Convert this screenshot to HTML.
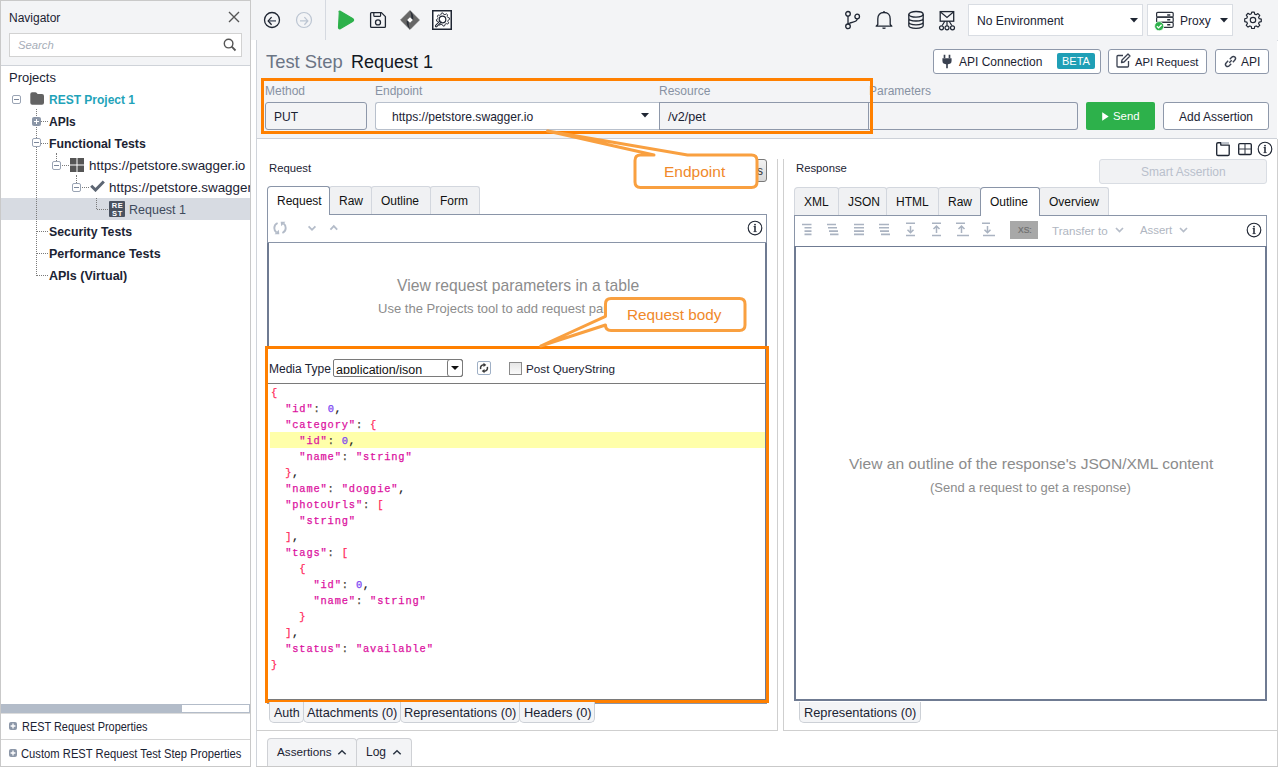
<!DOCTYPE html>
<html><head><meta charset="utf-8">
<style>
*{margin:0;padding:0;box-sizing:border-box}
html,body{width:1278px;height:767px;overflow:hidden;background:#fff}
body{position:relative;font-family:"Liberation Sans",sans-serif;font-size:12px;color:#1b2333}
.a{position:absolute}
.t{position:absolute;white-space:nowrap;line-height:1}
</style></head><body>

<!-- ============ LEFT NAVIGATOR ============ -->
<div class="a" style="left:0;top:0;width:251px;height:767px;border:1px solid #c9c9c9;border-bottom:none;background:#fff"></div>
<div class="a" style="top:1px;left:1px;width:249px;height:65px;background:#f3f4f6;border-bottom:1px solid #cfd3d9"></div>
<div class="t" style="left:9px;top:12px;font-size:12px;color:#1b2333">Navigator</div>
<svg class="a" style="left:228px;top:11px" width="12" height="12" viewBox="0 0 12 12"><path d="M1 1L11 11M11 1L1 11" stroke="#555" stroke-width="1.35"/></svg>
<div class="a" style="left:9px;top:33px;width:233px;height:24px;background:#fff;border:1px solid #d2d2d2"></div>
<div class="t" style="left:18px;top:40px;font-size:11.3px;font-style:italic;color:#a6adb8">Search</div>
<svg class="a" style="left:223px;top:38px" width="14" height="14" viewBox="0 0 14 14"><circle cx="5.6" cy="5.6" r="4.3" fill="none" stroke="#555" stroke-width="1.4"/><path d="M8.7 8.7L12.5 12.5" stroke="#555" stroke-width="1.8"/></svg>

<div class="t" style="left:9px;top:71px;font-size:13px;color:#1b2333">Projects</div>

<!-- tree -->

<!-- dotted connectors -->
<div class="a" style="left:1px;top:198px;width:249px;height:22px;background:#d7dbe2"></div>
<div class="a" style="left:36px;top:109px;width:1px;height:167px;border-left:1px dotted #7a7a7a"></div>
<div class="a" style="left:37px;top:121px;width:11px;height:1px;border-top:1px dotted #7a7a7a"></div>
<div class="a" style="left:37px;top:143px;width:11px;height:1px;border-top:1px dotted #7a7a7a"></div>
<div class="a" style="left:37px;top:231px;width:11px;height:1px;border-top:1px dotted #7a7a7a"></div>
<div class="a" style="left:37px;top:253px;width:11px;height:1px;border-top:1px dotted #7a7a7a"></div>
<div class="a" style="left:37px;top:275px;width:11px;height:1px;border-top:1px dotted #7a7a7a"></div>
<div class="a" style="left:56px;top:153px;width:1px;height:8px;border-left:1px dotted #7a7a7a"></div>
<div class="a" style="left:62px;top:165px;width:7px;height:1px;border-top:1px dotted #7a7a7a"></div>
<div class="a" style="left:76px;top:175px;width:1px;height:8px;border-left:1px dotted #7a7a7a"></div>
<div class="a" style="left:82px;top:187px;width:7px;height:1px;border-top:1px dotted #7a7a7a"></div>
<div class="a" style="left:96px;top:198px;width:1px;height:11px;border-left:1px dotted #7a7a7a"></div>
<div class="a" style="left:97px;top:209px;width:11px;height:1px;border-top:1px dotted #7a7a7a"></div>

<!-- row REST Project 1 -->
<div class="a" style="left:12px;top:95px;width:9px;height:9px;border:1px solid #9aa4b4;border-radius:2px;background:#fff"></div>
<div class="a" style="left:14px;top:99px;width:5px;height:1px;background:#7c879a"></div>
<svg class="a" style="left:30px;top:92px" width="15" height="13" viewBox="0 0 15 13"><path d="M0.3 2.2Q0.3 0.2 2.2 0.2H5.3Q6.2 0.2 6.8 1L7.6 2.1H12Q14 2.1 14 4V10.8Q14 12.7 12 12.7H2.2Q0.3 12.7 0.3 10.8Z" fill="#636363"/></svg>
<div class="t" style="left:49px;top:94px;font-size:12px;font-weight:700;color:#1fa3b9">REST Project 1</div>

<!-- APIs -->
<div class="a" style="left:32px;top:117px;width:9px;height:9px;border-radius:2px;background:#8c97a8"></div>
<div class="a" style="left:34px;top:121px;width:5px;height:1px;background:#fff"></div>
<div class="a" style="left:36px;top:119px;width:1px;height:5px;background:#fff"></div>
<div class="t" style="left:49px;top:116px;font-size:12px;font-weight:700;color:#1b2333">APIs</div>

<!-- Functional Tests -->
<div class="a" style="left:32px;top:138px;width:9px;height:9px;border:1px solid #9aa4b4;border-radius:2px;background:#fff"></div>
<div class="a" style="left:34px;top:142px;width:5px;height:1px;background:#7c879a"></div>
<div class="t" style="left:49px;top:138px;font-size:12.3px;font-weight:700;color:#1b2333">Functional Tests</div>

<!-- https 1 -->
<div class="a" style="left:52px;top:161px;width:9px;height:9px;border:1px solid #9aa4b4;border-radius:2px;background:#fff"></div>
<div class="a" style="left:54px;top:165px;width:5px;height:1px;background:#7c879a"></div>
<svg class="a" style="left:70px;top:158px" width="14" height="14" viewBox="0 0 14 14"><rect x="0" y="0" width="6.5" height="6.5" fill="#555"/><rect x="7.5" y="0" width="6.5" height="6.5" fill="#555"/><rect x="0" y="7.5" width="6.5" height="6.5" fill="#555"/><rect x="7.5" y="7.5" width="6.5" height="6.5" fill="#555"/></svg>
<div class="t" style="left:89px;top:159px;font-size:13.4px;color:#1b2333">https://petstore.swagger.io</div>

<!-- https 2 -->
<div class="a" style="left:72px;top:183px;width:9px;height:9px;border:1px solid #9aa4b4;border-radius:2px;background:#fff"></div>
<div class="a" style="left:74px;top:187px;width:5px;height:1px;background:#7c879a"></div>
<svg class="a" style="left:90px;top:180px" width="15" height="12" viewBox="0 0 15 12"><path d="M1.2 5.8L5.5 10L13.8 1.5" fill="none" stroke="#5d6673" stroke-width="3"/></svg>
<div class="a" style="left:109px;top:176px;width:141px;height:22px;overflow:hidden"><div class="t" style="left:0;top:5px;font-size:13.4px;color:#1b2333">https://petstore.swagger.io</div></div>

<!-- Request 1 selected -->
<div class="a" style="left:109px;top:201px;width:16px;height:16px;background:#4a5260;border-radius:1px"></div>
<div class="t" style="left:109px;top:202px;width:16px;text-align:center;font-size:7.5px;font-weight:700;color:#fff;letter-spacing:0.6px;line-height:7.5px;padding-left:1px">RE<br>ST</div>
<div class="t" style="left:129px;top:204px;font-size:12.5px;color:#3e4a5c">Request 1</div>

<div class="t" style="left:49px;top:226px;font-size:12.3px;font-weight:700;color:#1b2333">Security Tests</div>
<div class="t" style="left:49px;top:248px;font-size:12.5px;font-weight:700;color:#1b2333">Performance Tests</div>
<div class="t" style="left:49px;top:270px;font-size:12.5px;font-weight:700;color:#1b2333">APIs (Virtual)</div>

<!-- scrollbar -->
<div class="a" style="left:1px;top:704px;width:249px;height:9px;background:#fff;border:1px solid #b3bcc9"></div>
<div class="a" style="left:1px;top:704px;width:181px;height:9px;background:#b3bcc9"></div>
<div class="a" style="left:1px;top:713px;width:249px;height:1px;background:#dcdcdc"></div>
<div class="a" style="left:1px;top:739px;width:249px;height:1px;background:#d4d4d4"></div>
<svg class="a" style="left:9px;top:722px" width="8" height="8" viewBox="0 0 8 8"><rect width="8" height="8" rx="2" fill="#8c97a8"/><path d="M1.6 4H6.4M4 1.6V6.4" stroke="#fff" stroke-width="1.3"/></svg>
<div class="t" style="left:22px;top:721px;font-size:12px;color:#1b2333;transform:scaleX(0.91);transform-origin:0 0">REST Request Properties</div>
<svg class="a" style="left:9px;top:749px" width="8" height="8" viewBox="0 0 8 8"><rect width="8" height="8" rx="2" fill="#8c97a8"/><path d="M1.6 4H6.4M4 1.6V6.4" stroke="#fff" stroke-width="1.3"/></svg>
<div class="t" style="left:21px;top:748px;font-size:12px;color:#1b2333;transform:scaleX(0.935);transform-origin:0 0">Custom REST Request Test Step Properties</div>
<div class="a" style="left:0;top:766px;width:251px;height:1px;background:#c9c9c9"></div>



<!-- ============ TOP TOOLBAR ============ -->
<div class="a" style="left:251px;top:0;width:1027px;height:40px;background:#f3f4f6"></div>
<div class="a" style="left:256px;top:40px;width:1022px;height:1px;background:#d5d9e0"></div>
<div class="a" style="left:325px;top:0;width:1px;height:40px;background:#d5d9e0"></div>
<svg class="a" style="left:263px;top:11px" width="18" height="18" viewBox="0 0 18 18"><circle cx="9" cy="9" r="7.5" fill="none" stroke="#1f2633" stroke-width="1.3"/><path d="M13 9.9H6.2" fill="none" stroke="#5a6272" stroke-width="1.5"/><path d="M8.6 6.1L5.2 9.9L8.6 13.7" fill="none" stroke="#1f2633" stroke-width="1.3"/></svg>
<svg class="a" style="left:295px;top:11px" width="18" height="18" viewBox="0 0 18 18"><circle cx="9" cy="9" r="7.5" fill="none" stroke="#bcc5d2" stroke-width="1.2"/><path d="M5 9.9H11.8M9.4 6.1L12.8 9.9L9.4 13.7" fill="none" stroke="#bcc5d2" stroke-width="1.3"/></svg>
<svg class="a" style="left:337px;top:10px" width="18" height="20" viewBox="0 0 18 20"><path d="M2.3 2.5Q1.5 1.2 2.8 1.1L16 8.8Q17.2 10 16 11.2L2.8 18.9Q1.5 18.8 1.5 17.5Z" fill="#2db14b" stroke="#2db14b" stroke-width="1.2" stroke-linejoin="round"/></svg>
<svg class="a" style="left:369px;top:11px" width="18" height="18" viewBox="0 0 18 18"><path d="M1.6 2.6Q1.6 1.6 2.6 1.6H12.4L16.4 5.6V15.4Q16.4 16.4 15.4 16.4H2.6Q1.6 16.4 1.6 15.4Z" fill="none" stroke="#1f2633" stroke-width="1.3" stroke-linejoin="round"/><path d="M4.8 1.6V4.4Q4.8 5.4 5.8 5.4H10.6Q11.6 5.4 11.6 4.4V1.6" fill="none" stroke="#1f2633" stroke-width="1.2"/><circle cx="9" cy="11.4" r="2.5" fill="none" stroke="#1f2633" stroke-width="1.3"/></svg>
<svg class="a" style="left:400px;top:10px" width="20" height="20" viewBox="0 0 20 20"><path d="M10 0.6L19.4 10L10 19.4L0.6 10Z" fill="#676767" stroke="#676767" stroke-width="0.8" stroke-linejoin="round"/><path d="M10 0.8Q14 4 13.2 10L11.4 8.3Q11.6 4.2 10 0.8Z" fill="#2a2f38"/><path d="M10 19.2Q6 16 6.8 10L8.6 11.7Q8.4 15.8 10 19.2Z" fill="#2a2f38"/><path d="M10 7.2L12.8 10L10 12.8L7.2 10Z" fill="#fff"/></svg>
<svg class="a" style="left:432px;top:10px" width="20" height="20" viewBox="0 0 20 20"><rect x="0.75" y="0.75" width="18.5" height="18.5" fill="#fff" stroke="#1f2633" stroke-width="1.5"/><path d="M15.80 7.51 L17.39 7.86 L17.60 9.40 L16.16 10.15 L15.80 11.49 L16.68 12.86 L15.74 14.09 L14.19 13.61 L12.99 14.30 L12.64 15.89 L11.10 16.10 L10.35 14.66 L9.01 14.30 L7.64 15.18 L6.41 14.24 L6.89 12.69 L6.20 11.49 L4.61 11.14 L4.40 9.60 L5.84 8.85 L6.20 7.51 L5.32 6.14 L6.26 4.91 L7.81 5.39 L9.01 4.70 L9.36 3.11 L10.90 2.90 L11.65 4.34 L12.99 4.70 L14.36 3.82 L15.59 4.76 L15.11 6.31Z" fill="none" stroke="#1f2633" stroke-width="0.9" stroke-linejoin="round"/><circle cx="10.5" cy="9.5" r="4.6" fill="#fff"/><circle cx="10.5" cy="9.5" r="3.3" fill="none" stroke="#1f2633" stroke-width="1.2"/><path d="M8.2 12L4.2 16" stroke="#1f2633" stroke-width="2.6" stroke-linecap="round"/><path d="M8 12.2L4.4 15.8" stroke="#fff" stroke-width="0.9" stroke-linecap="round"/></svg>



<svg class="a" style="left:844px;top:10px" width="17" height="20" viewBox="0 0 17 20"><circle cx="4" cy="3.8" r="2.3" fill="none" stroke="#1f2633" stroke-width="1.3"/><circle cx="4" cy="16.3" r="2.3" fill="none" stroke="#1f2633" stroke-width="1.3"/><circle cx="13.2" cy="6.5" r="2.3" fill="none" stroke="#1f2633" stroke-width="1.3"/><path d="M4 6.1V14M13.2 8.8Q13.2 11.2 9 12.2L6 13Q4 13.6 4 14" fill="none" stroke="#1f2633" stroke-width="1.3"/></svg>
<svg class="a" style="left:875px;top:10px" width="18" height="20" viewBox="0 0 18 20"><path d="M2.8 14.5V9Q2.8 2.5 9 2.5Q15.2 2.5 15.2 9V14.5L16.8 16.2H1.2Z" fill="none" stroke="#1f2633" stroke-width="1.3" stroke-linejoin="round"/><path d="M7.5 17.8Q9 19 10.5 17.8" fill="none" stroke="#1f2633" stroke-width="1.3"/><path d="M9 1V2.5" stroke="#1f2633" stroke-width="1.3"/></svg>
<svg class="a" style="left:907px;top:10px" width="18" height="20" viewBox="0 0 18 20"><ellipse cx="9" cy="4.3" rx="7.2" ry="2.8" fill="none" stroke="#1f2633" stroke-width="1.3"/><path d="M1.8 4.3V15.5Q1.8 18.3 9 18.3Q16.2 18.3 16.2 15.5V4.3M1.8 8.3Q1.8 11 9 11Q16.2 11 16.2 8.3M1.8 12Q1.8 14.8 9 14.8Q16.2 14.8 16.2 12" fill="none" stroke="#1f2633" stroke-width="1.3"/></svg>
<svg class="a" style="left:938px;top:10px" width="21" height="21" viewBox="0 0 21 21"><rect x="2.2" y="1.6" width="13.5" height="9.6" fill="none" stroke="#1f2633" stroke-width="1.3"/><path d="M2.2 1.8L9 7.5L15.7 1.8" fill="none" stroke="#1f2633" stroke-width="1.2"/><path d="M9 11.2V15.8M6.8 11.2L4.2 15.5M11.2 11.2L13.8 15.5" fill="none" stroke="#1f2633" stroke-width="1.2"/><circle cx="3.5" cy="17.8" r="2" fill="none" stroke="#1f2633" stroke-width="1.2"/><circle cx="9" cy="17.8" r="2" fill="none" stroke="#1f2633" stroke-width="1.2"/><circle cx="14.5" cy="17.8" r="2" fill="none" stroke="#1f2633" stroke-width="1.2"/></svg>

<div class="a" style="left:968px;top:4px;width:175px;height:32px;background:#fff;border:1px solid #d9dde3"></div>
<div class="t" style="left:977px;top:15px;font-size:12.1px;color:#1b2333">No Environment</div>
<svg class="a" style="left:1130px;top:18px" width="8" height="5" viewBox="0 0 8 5"><path d="M0 0H8L4 4.5Z" fill="#1f2633"/></svg>
<div class="a" style="left:1147px;top:4px;width:86px;height:32px;background:#fff;border:1px solid #d9dde3"></div>
<svg class="a" style="left:1154px;top:11px" width="21" height="21" viewBox="0 0 21 21"><rect x="2.6" y="1.4" width="16.6" height="4.8" rx="1.2" fill="none" stroke="#2a303b" stroke-width="1.2"/><rect x="2.6" y="6.2" width="16.6" height="5.2" rx="1.2" fill="none" stroke="#2a303b" stroke-width="1.2"/><rect x="2.6" y="11.4" width="16.6" height="4.9" rx="1.2" fill="none" stroke="#2a303b" stroke-width="1.2"/><path d="M13.2 3.9H16.3M13.2 8.8H16.3M13.2 13.8H16.3" stroke="#2a303b" stroke-width="1.5"/><circle cx="5.2" cy="15.2" r="4.6" fill="#2db14b" stroke="#fff" stroke-width="0.8"/><path d="M2.9 15.2L4.6 16.9L7.6 13.7" fill="none" stroke="#fff" stroke-width="1.3"/></svg>
<div class="t" style="left:1180px;top:15px;font-size:12px;color:#1b2333">Proxy</div>
<svg class="a" style="left:1220px;top:18px" width="8" height="5" viewBox="0 0 8 5"><path d="M0 0H8L4 4.5Z" fill="#1f2633"/></svg>
<svg class="a" style="left:1244px;top:11px" width="18" height="18" viewBox="0 0 20 20"><path d="M8.6 1.2h2.8l.5 2.3 1.6.7 2-1.3 2 2-1.3 2 .7 1.6 2.3.5v2.8l-2.3.5-.7 1.6 1.3 2-2 2-2-1.3-1.6.7-.5 2.3H8.6l-.5-2.3-1.6-.7-2 1.3-2-2 1.3-2-.7-1.6-2.3-.5V8.6l2.3-.5.7-1.6-1.3-2 2-2 2 1.3 1.6-.7z" fill="none" stroke="#1f2633" stroke-width="1.3" stroke-linejoin="round"/><circle cx="10" cy="10" r="3" fill="none" stroke="#1f2633" stroke-width="1.3"/></svg>


<!-- ============ TEST STEP HEADER ============ -->
<div class="a" style="left:256px;top:40px;width:1021px;height:99px;background:#f3f4f6;border-left:1px solid #d0d4da;border-bottom:1px solid #cdd1d8"></div>
<div class="t" style="left:266px;top:53px;font-size:18.4px;color:#6b7585">Test Step</div>
<div class="t" style="left:351px;top:53px;font-size:18px;color:#111822">Request 1</div>

<div class="t" style="left:265px;top:85px;font-size:12px;color:#8792a3">Method</div>
<div class="a" style="left:265px;top:102px;width:102px;height:28px;background:#f3f4f6;border:1px solid #8e98aa;border-radius:3px"></div>
<div class="t" style="left:274px;top:111px;font-size:12px;color:#1b2333">PUT</div>

<div class="t" style="left:375px;top:85px;font-size:12px;color:#8792a3">Endpoint</div>
<div class="a" style="left:375px;top:102px;width:285px;height:28px;background:#fff;border:1px solid #b8c0cc;border-right:none;border-radius:3px 0 0 3px"></div>
<div class="t" style="left:392px;top:111px;font-size:12.1px;color:#1b2333">https://petstore.swagger.io</div>
<svg class="a" style="left:641px;top:113px" width="8" height="5" viewBox="0 0 8 5"><path d="M0 0H8L4 4.5Z" fill="#1f2633"/></svg>

<div class="t" style="left:659px;top:85px;font-size:12px;color:#8792a3">Resource</div>
<div class="a" style="left:659px;top:102px;width:210px;height:28px;background:#f3f4f6;border:1px solid #8e98aa"></div>
<div class="t" style="left:668px;top:111px;font-size:12.6px;color:#1b2333">/v2/pet</div>

<div class="t" style="left:869px;top:85px;font-size:12px;color:#8792a3">Parameters</div>
<div class="a" style="left:869px;top:102px;width:209px;height:28px;background:#f3f4f6;border:1px solid #8e98aa;border-left:none;border-radius:0 3px 3px 0"></div>

<!-- orange box -->
<div class="a" style="left:261px;top:78px;width:612px;height:56px;border:3px solid #ff8000"></div>

<div class="a" style="left:1086px;top:102px;width:69px;height:28px;background:#2db14b;border-radius:2px"></div>
<svg class="a" style="left:1102px;top:112px" width="8" height="10" viewBox="0 0 8 10"><path d="M0.2 0.2L6.7 4.5L0.2 8.8Z" fill="#fff"/></svg>
<div class="t" style="left:1113px;top:111px;font-size:11.4px;color:#fff">Send</div>
<div class="a" style="left:1163px;top:102px;width:106px;height:28px;background:#fff;border:1px solid #8e98aa;border-radius:3px"></div>
<div class="t" style="left:1179px;top:111px;font-size:12px;color:#1b2333">Add Assertion</div>

<div class="a" style="left:933px;top:49px;width:168px;height:25px;background:#fff;border:1px solid #8e98aa;border-radius:3px"></div>
<svg class="a" style="left:942px;top:54px" width="10" height="15" viewBox="0 0 12 17"><path d="M3 0.5V4.5M9 0.5V4.5" stroke="#3a4150" stroke-width="2"/><path d="M0.5 4.5H11.5V8Q11.5 12 6 12Q0.5 12 0.5 8Z" fill="#3a4150"/><path d="M6 11.5V16.5" stroke="#3a4150" stroke-width="2"/></svg>
<div class="t" style="left:959px;top:56px;font-size:12px;color:#1b2333">API Connection</div>
<div class="a" style="left:1057px;top:53px;width:38px;height:16px;background:#1f9fb6;border-radius:2px"></div>
<div class="t" style="left:1062px;top:56px;font-size:11px;color:#fff">BETA</div>

<div class="a" style="left:1108px;top:49px;width:99px;height:25px;background:#fff;border:1px solid #8e98aa;border-radius:3px"></div>
<svg class="a" style="left:1116px;top:53px" width="15" height="15" viewBox="0 0 15 15"><path d="M7 2.5H2Q1 2.5 1 3.5V13Q1 14 2 14H11.5Q12.5 14 12.5 13V8" fill="none" stroke="#3a4150" stroke-width="1.3"/><path d="M5.5 9.5L6 7L12 1L14 3L8 9Z" fill="none" stroke="#3a4150" stroke-width="1.3" stroke-linejoin="round"/></svg>
<div class="t" style="left:1135px;top:57px;font-size:11.3px;color:#1b2333">API Request</div>

<div class="a" style="left:1215px;top:49px;width:54px;height:25px;background:#fff;border:1px solid #8e98aa;border-radius:3px"></div>
<svg class="a" style="left:1223px;top:54px" width="15" height="15" viewBox="0 0 15 15"><path d="M6.3 8.7L8.7 6.3M5.2 6.8L3.3 8.7Q1.6 10.4 3.1 11.9Q4.6 13.4 6.3 11.7L8.2 9.8M9.8 8.2L11.7 6.3Q13.4 4.6 11.9 3.1Q10.4 1.6 8.7 3.3L6.8 5.2" fill="none" stroke="#3a4150" stroke-width="1.4"/></svg>
<div class="t" style="left:1241px;top:56px;font-size:12px;color:#1b2333">API</div>



<!-- ============ REQUEST PANEL ============ -->
<div class="a" style="left:256px;top:139px;width:522px;height:592px;background:#fff;border-left:1px solid #d0d4da;border-bottom:1px solid #cfcfcf"></div>
<div class="a" style="left:783px;top:139px;width:495px;height:592px;background:#fff;border-bottom:1px solid #cfcfcf"></div>
<div class="a" style="left:777px;top:159px;width:1px;height:572px;background:#cfcfcf"></div>
<div class="a" style="left:783px;top:159px;width:1px;height:572px;background:#cfcfcf"></div>
<div class="a" style="left:1277px;top:139px;width:1px;height:628px;background:#cfcfcf"></div>

<div class="t" style="left:269px;top:163px;font-size:11.3px;color:#1b2333">Request</div>
<!-- hidden button behind callout -->
<div class="a" style="left:700px;top:159px;width:67px;height:23px;border:1px solid #7a7a7a;border-radius:3px;background:linear-gradient(#f2f2f2,#d8d8d8)"></div>
<div class="t" style="left:757px;top:165px;font-size:12px;color:#333">s</div>

<!-- tabs -->
<div class="a" style="left:267px;top:214px;width:500px;height:1px;background:#8a95a8"></div>
<div class="a" style="left:329px;top:186px;width:43px;height:28px;background:#f0f1f3;border:1px solid #d3d7de;border-bottom:none;border-radius:3px 3px 0 0"></div>
<div class="a" style="left:371px;top:186px;width:60px;height:28px;background:#f0f1f3;border:1px solid #d3d7de;border-bottom:none;border-radius:3px 3px 0 0"></div>
<div class="a" style="left:430px;top:186px;width:50px;height:28px;background:#f0f1f3;border:1px solid #d3d7de;border-bottom:none;border-radius:3px 3px 0 0"></div>
<div class="a" style="left:267px;top:186px;width:63px;height:29px;background:#fff;border:1px solid #8a95a8;border-bottom:none;border-radius:4px 3px 0 0"></div>
<div class="t" style="left:277px;top:195px;font-size:12px;color:#111">Request</div>
<div class="t" style="left:339px;top:195px;font-size:12px;color:#111">Raw</div>
<div class="t" style="left:381px;top:195px;font-size:12px;color:#111">Outline</div>
<div class="t" style="left:440px;top:195px;font-size:12px;color:#111">Form</div>

<!-- content box -->
<div class="a" style="left:267px;top:214px;width:500px;height:490px;border:1px solid #8a95a8;border-top:none"></div>
<div class="a" style="left:267px;top:242px;width:500px;height:1px;background:#8a95a8"></div>
<div class="a" style="left:267px;top:243px;width:2px;height:460px;background:#6f7b92"></div>
<div class="a" style="left:765px;top:243px;width:2px;height:460px;background:#6f7b92"></div>
<svg class="a" style="left:270px;top:218px" width="20" height="20" viewBox="270 218 20 20"><path d="M277.6 223Q274.3 224.5 274.3 228Q274.3 231 276.5 232.5" fill="none" stroke="#b4bcc9" stroke-width="1.9"/><path d="M274.6 234.3H279.3L278.8 229.8Z" fill="#b4bcc9"/><path d="M282.4 233Q285.7 231.5 285.7 228Q285.7 225 283.5 223.5" fill="none" stroke="#b4bcc9" stroke-width="1.9"/><path d="M285.4 221.7H280.7L281.2 226.2Z" fill="#b4bcc9"/></svg>
<svg class="a" style="left:306px;top:223px" width="12" height="10" viewBox="306 223 12 10"><path d="M308.6 226.3L312 229.8L315.4 226.3" fill="none" stroke="#b4bcc9" stroke-width="1.8"/></svg>
<svg class="a" style="left:328px;top:222px" width="12" height="10" viewBox="328 222 12 10"><path d="M330.4 229.6L333.8 226.1L337.2 229.6" fill="none" stroke="#b4bcc9" stroke-width="1.8"/></svg>
<svg class="a" style="left:747px;top:220px" width="16" height="16" viewBox="0 0 16 16"><circle cx="8" cy="8" r="6.8" fill="none" stroke="#1f2633" stroke-width="1.15"/><rect x="7.2" y="3.9" width="1.6" height="1.5" fill="#1f2633"/><path d="M8 6.3V11.3" stroke="#1f2633" stroke-width="1.5"/><path d="M6.6 6.6H8.6M6.6 11.6H9.6" stroke="#1f2633" stroke-width="0.9"/></svg>

<div class="t" style="left:397px;top:278px;font-size:15.7px;color:#8c8c8c">View request parameters in a table</div>
<div class="t" style="left:378px;top:302px;font-size:13.5px;color:#8c8c8c;transform:scaleX(0.965);transform-origin:0 0">Use the Projects tool to add request parameters</div>

<!-- request body box -->
<div class="a" style="left:268px;top:349px;width:497px;height:351px;background:#fff"></div>
<div class="t" style="left:269px;top:363px;font-size:12px;color:#1b2333">Media Type</div>
<div class="a" style="left:333px;top:359px;width:130px;height:18px;background:#fff;border:1px solid #7a7a7a;border-radius:2px"></div>
<div class="a" style="left:447px;top:359px;width:16px;height:18px;border:1px solid #7a7a7a;border-radius:3px"></div>
<svg class="a" style="left:451px;top:366px" width="8" height="4" viewBox="0 0 8 4"><path d="M0 0H8L4 4Z" fill="#111"/></svg>
<div class="a" style="left:334px;top:361px;width:112px;height:13px;overflow:hidden"><div class="t" style="left:2px;top:3px;font-size:12.5px;color:#111">application/json</div></div>
<div class="a" style="left:477px;top:361px;width:14px;height:14px;border:1px solid #9fb0c6;border-radius:2px;background:#fff"></div>
<svg class="a" style="left:477px;top:361px" width="14" height="14" viewBox="0 0 14 14"><path d="M3.6 8.2Q3 4 7 3.8" fill="none" stroke="#3a3a3a" stroke-width="1.5"/><path d="M6.5 1.8L9.3 3.9L6.5 5.9Z" fill="#3a3a3a"/><path d="M10.4 5.8Q11 10 7 10.2" fill="none" stroke="#3a3a3a" stroke-width="1.5"/><path d="M7.5 12.2L4.7 10.1L7.5 8.1Z" fill="#3a3a3a"/></svg>
<div class="a" style="left:509px;top:362px;width:13px;height:13px;border:1px solid #8a8a8a;background:linear-gradient(#e6e6e6,#fafafa)"></div>
<div class="t" style="left:526px;top:363px;font-size:11.7px;color:#1b2333">Post QueryString</div>

<div class="a" style="left:268px;top:383px;width:497px;height:317px;border-top:1px solid #7a7a7a;border-bottom:1px solid #7a7a7a"></div>
<div class="a" style="left:270px;top:432px;width:495px;height:16px;background:#ffffaa"></div>
<pre id="code" class="a" style="left:271px;top:385px;font-family:'Liberation Mono',monospace;font-size:10.4px;letter-spacing:0.84px;line-height:16px;font-weight:400;-webkit-text-stroke:0.25px currentColor"><span style="color:#ff2a5c">{</span>
  <span style="color:#dc12a0">"id"</span><span style="color:#4a4538">: </span><span style="color:#7b45f2">0</span><span style="color:#111">,</span>
  <span style="color:#dc12a0">"category"</span><span style="color:#4a4538">: </span><span style="color:#ff2a5c">{</span>
    <span style="color:#dc12a0">"id"</span><span style="color:#4a4538">: </span><span style="color:#7b45f2">0</span><span style="color:#111">,</span>
    <span style="color:#dc12a0">"name"</span><span style="color:#4a4538">: </span><span style="color:#dc12a0">"string"</span>
  <span style="color:#ff2a5c">}</span><span style="color:#111">,</span>
  <span style="color:#dc12a0">"name"</span><span style="color:#4a4538">: </span><span style="color:#dc12a0">"doggie"</span><span style="color:#111">,</span>
  <span style="color:#dc12a0">"photoUrls"</span><span style="color:#4a4538">: </span><span style="color:#ff2a5c">[</span>
    <span style="color:#dc12a0">"string"</span>
  <span style="color:#ff2a5c">]</span><span style="color:#111">,</span>
  <span style="color:#dc12a0">"tags"</span><span style="color:#4a4538">: </span><span style="color:#ff2a5c">[</span>
    <span style="color:#ff2a5c">{</span>
      <span style="color:#dc12a0">"id"</span><span style="color:#4a4538">: </span><span style="color:#7b45f2">0</span><span style="color:#111">,</span>
      <span style="color:#dc12a0">"name"</span><span style="color:#4a4538">: </span><span style="color:#dc12a0">"string"</span>
    <span style="color:#ff2a5c">}</span>
  <span style="color:#ff2a5c">]</span><span style="color:#111">,</span>
  <span style="color:#dc12a0">"status"</span><span style="color:#4a4538">: </span><span style="color:#dc12a0">"available"</span>
<span style="color:#ff2a5c">}</span></pre>

<div class="a" style="left:265px;top:346px;width:504px;height:357px;border:3px solid #ff8000"></div>

<!-- bottom tabs -->
<div class="a" style="left:269px;top:702px;width:35px;height:21px;background:#f3f4f6;border:1px solid #ccd0d6;border-top:none;border-radius:0 0 5px 5px"></div>
<div class="a" style="left:303px;top:702px;width:98px;height:21px;background:#f3f4f6;border:1px solid #ccd0d6;border-top:none;border-radius:0 0 5px 5px"></div>
<div class="a" style="left:400px;top:702px;width:120px;height:21px;background:#f3f4f6;border:1px solid #ccd0d6;border-top:none;border-radius:0 0 5px 5px"></div>
<div class="a" style="left:519px;top:702px;width:76px;height:21px;background:#f3f4f6;border:1px solid #ccd0d6;border-top:none;border-radius:0 0 5px 5px"></div>
<div class="t" style="left:274px;top:707px;font-size:12.5px;color:#1b2333">Auth</div>
<div class="t" style="left:307px;top:707px;font-size:12.8px;color:#1b2333">Attachments (0)</div>
<div class="t" style="left:404px;top:707px;font-size:12.8px;color:#1b2333">Representations (0)</div>
<div class="t" style="left:524px;top:707px;font-size:12.8px;color:#1b2333">Headers (0)</div>

<!-- ============ RESPONSE PANEL ============ -->
<svg class="a" style="left:1215px;top:141px" width="16" height="16" viewBox="0 0 16 16"><path d="M1.7 13.2V3Q1.7 1.7 3 1.7H5.8V4.1H14.2V13.2Q14.2 14.5 12.9 14.5H3Q1.7 14.5 1.7 13.2Z" fill="none" stroke="#1f2633" stroke-width="1.35" stroke-linejoin="round"/><path d="M6.3 2H14" stroke="#7d8797" stroke-width="1"/></svg>
<svg class="a" style="left:1237px;top:142px" width="16" height="14" viewBox="0 0 16 14"><rect x="1.7" y="1.6" width="12.6" height="10.9" rx="1.2" fill="none" stroke="#1f2633" stroke-width="1.35"/><path d="M8 1.6V12.5M1.7 7.05H14.3" stroke="#3a404b" stroke-width="1.1"/></svg>
<svg class="a" style="left:1257px;top:141px" width="16" height="16" viewBox="0 0 16 16"><circle cx="8" cy="8" r="6.8" fill="none" stroke="#1f2633" stroke-width="1.15"/><rect x="7.2" y="3.9" width="1.6" height="1.5" fill="#1f2633"/><path d="M8 6.3V11.3" stroke="#1f2633" stroke-width="1.5"/><path d="M6.6 6.6H8.6M6.6 11.6H9.6" stroke="#1f2633" stroke-width="0.9"/></svg>

<div class="t" style="left:796px;top:163px;font-size:11.3px;color:#1b2333">Response</div>
<div class="a" style="left:1099px;top:159px;width:168px;height:25px;background:#f1f2f4;border:1px solid #d9dde3;border-radius:3px"></div>
<div class="t" style="left:1141px;top:166px;font-size:12px;color:#b9c0cc">Smart Assertion</div>

<div class="a" style="left:794px;top:215px;width:473px;height:1px;background:#8a95a8"></div>
<div class="a" style="left:794px;top:187px;width:45px;height:28px;background:#f0f1f3;border:1px solid #d3d7de;border-bottom:none;border-radius:4px 3px 0 0"></div>
<div class="a" style="left:838px;top:187px;width:49px;height:28px;background:#f0f1f3;border:1px solid #d3d7de;border-bottom:none;border-radius:3px 3px 0 0"></div>
<div class="a" style="left:886px;top:187px;width:53px;height:28px;background:#f0f1f3;border:1px solid #d3d7de;border-bottom:none;border-radius:3px 3px 0 0"></div>
<div class="a" style="left:938px;top:187px;width:43px;height:28px;background:#f0f1f3;border:1px solid #d3d7de;border-bottom:none;border-radius:3px 3px 0 0"></div>
<div class="a" style="left:1039px;top:187px;width:70px;height:28px;background:#f0f1f3;border:1px solid #d3d7de;border-bottom:none;border-radius:3px 3px 0 0"></div>
<div class="a" style="left:980px;top:187px;width:60px;height:29px;background:#fff;border:1px solid #8a95a8;border-bottom:none;border-radius:4px 3px 0 0"></div>
<div class="t" style="left:804px;top:196px;font-size:12px;color:#111">XML</div>
<div class="t" style="left:848px;top:196px;font-size:12px;color:#111">JSON</div>
<div class="t" style="left:896px;top:196px;font-size:12px;color:#111">HTML</div>
<div class="t" style="left:948px;top:196px;font-size:12px;color:#111">Raw</div>
<div class="t" style="left:990px;top:196px;font-size:12px;color:#111">Outline</div>
<div class="t" style="left:1049px;top:196px;font-size:12px;color:#111">Overview</div>

<div class="a" style="left:794px;top:215px;width:473px;height:486px;border:1px solid #8a95a8;border-top:none"></div>
<div class="a" style="left:794px;top:246px;width:473px;height:1px;background:#6f7b92"></div>
<div class="a" style="left:794px;top:247px;width:2px;height:454px;background:#6f7b92"></div>
<div class="a" style="left:1265px;top:247px;width:2px;height:454px;background:#6f7b92"></div>
<div class="a" style="left:794px;top:699px;width:473px;height:2px;background:#6f7b92"></div>
<svg class="a" style="left:802px;top:221px" width="13" height="16" viewBox="0 0 13 16"><path d="M0 3.5H9.5M2.5 6.800000000000011H9.5M2.5 10.099999999999994H9.5M2.5 13.400000000000006H9.5" fill="none" stroke="#aab3c1" stroke-width="1.6"/></svg>
<svg class="a" style="left:827px;top:221px" width="13" height="16" viewBox="0 0 13 16"><path d="M0 3.5H9M1 6.800000000000011H10M2 10.099999999999994H11M3 13.400000000000006H11.5" fill="none" stroke="#aab3c1" stroke-width="1.6"/></svg>
<svg class="a" style="left:854px;top:221px" width="13" height="16" viewBox="0 0 13 16"><path d="M0 3.5H10M0 6.800000000000011H10M0 10.099999999999994H10M0 13.400000000000006H10" fill="none" stroke="#aab3c1" stroke-width="1.6"/></svg>
<svg class="a" style="left:879px;top:221px" width="13" height="16" viewBox="0 0 13 16"><path d="M0 3.5H10M0 6.800000000000011H10M1 10.099999999999994H10M2 13.400000000000006H11" fill="none" stroke="#aab3c1" stroke-width="1.6"/></svg>
<svg class="a" style="left:906px;top:221px" width="14" height="16" viewBox="0 0 14 16"><path d="M0 2.2H9M0 14.5H9M4.5 5V11.5M1.5 8.8L4.5 11.8L7.5 8.8" fill="none" stroke="#aab3c1" stroke-width="1.5"/></svg>
<svg class="a" style="left:932px;top:221px" width="14" height="16" viewBox="0 0 14 16"><path d="M0 2.2H9M0 14.5H9M4.5 12V5.2M1.5 8L4.5 5L7.5 8" fill="none" stroke="#aab3c1" stroke-width="1.5"/></svg>
<svg class="a" style="left:956px;top:221px" width="14" height="16" viewBox="0 0 14 16"><path d="M0 2.2H9M1 14.5H13M5.5 12V5.2M2.5 8L5.5 5L8.5 8" fill="none" stroke="#aab3c1" stroke-width="1.5"/></svg>
<svg class="a" style="left:982px;top:221px" width="14" height="16" viewBox="0 0 14 16"><path d="M0 2.2H8M1 14.5H13M5.5 5V11.5M2.5 8.8L5.5 11.8L8.5 8.8" fill="none" stroke="#aab3c1" stroke-width="1.5"/></svg>
<div class="a" style="left:1010px;top:221px;width:28px;height:18px;background:#a8a8a8"></div>
<div class="t" style="left:1018px;top:226px;font-size:8.5px;font-weight:400;-webkit-text-stroke:0.2px #707070;color:#707070">XS:</div>
<div class="t" style="left:1052px;top:225px;font-size:11.6px;color:#b0b6c1">Transfer to</div>
<svg class="a" style="left:1115px;top:227px" width="9" height="6" viewBox="0 0 9 6"><path d="M1 1L4.5 4.5L8 1" fill="none" stroke="#b6bdc9" stroke-width="1.7"/></svg>
<div class="t" style="left:1140px;top:225px;font-size:11.4px;color:#b0b6c1">Assert</div>
<svg class="a" style="left:1179px;top:227px" width="9" height="6" viewBox="0 0 9 6"><path d="M1 1L4.5 4.5L8 1" fill="none" stroke="#b6bdc9" stroke-width="1.7"/></svg>
<svg class="a" style="left:1246px;top:222px" width="16" height="16" viewBox="0 0 16 16"><circle cx="8" cy="8" r="6.8" fill="none" stroke="#1f2633" stroke-width="1.15"/><rect x="7.2" y="3.9" width="1.6" height="1.5" fill="#1f2633"/><path d="M8 6.3V11.3" stroke="#1f2633" stroke-width="1.5"/><path d="M6.6 6.6H8.6M6.6 11.6H9.6" stroke="#1f2633" stroke-width="0.9"/></svg>

<div class="t" style="left:849px;top:456px;font-size:15.55px;color:#8c8c8c">View an outline of the response's JSON/XML content</div>
<div class="t" style="left:930px;top:481px;font-size:13.5px;color:#8c8c8c;transform:scaleX(0.962);transform-origin:0 0">(Send a request to get a response)</div>

<div class="a" style="left:799px;top:702px;width:122px;height:21px;background:#f3f4f6;border:1px solid #ccd0d6;border-top:none;border-radius:0 0 5px 5px"></div>
<div class="t" style="left:804px;top:707px;font-size:12.8px;color:#1b2333">Representations (0)</div>

<!-- ============ BOTTOM ============ -->
<div class="a" style="left:256px;top:731px;width:1px;height:36px;background:#d0d4da"></div>
<div class="a" style="left:267px;top:738px;width:90px;height:29px;background:#f3f4f6;border:1px solid #cfd1d5;border-bottom:none;border-radius:4px 4px 0 0"></div>
<div class="a" style="left:356px;top:738px;width:56px;height:29px;background:#f3f4f6;border:1px solid #cfd1d5;border-bottom:none;border-radius:4px 4px 0 0"></div>
<div class="t" style="left:277px;top:746px;font-size:11.7px;color:#1b2333">Assertions</div>
<svg class="a" style="left:337px;top:749px" width="10" height="6" viewBox="0 0 10 6"><path d="M1.3 5.2L5 1.8L8.7 5.2" fill="none" stroke="#2a3442" stroke-width="1.5"/></svg>
<div class="t" style="left:366px;top:746px;font-size:12px;color:#1b2333">Log</div>
<svg class="a" style="left:392px;top:749px" width="10" height="6" viewBox="0 0 10 6"><path d="M1.3 5.2L5 1.8L8.7 5.2" fill="none" stroke="#2a3442" stroke-width="1.5"/></svg>
<div class="a" style="left:256px;top:766px;width:1022px;height:1px;background:#c9c9c9"></div>

<!-- ============ CALLOUTS ============ -->
<svg class="a" style="left:0;top:0" width="1278" height="767" viewBox="0 0 1278 767">
  <path d="M547 131 L636 153 L758 153 Q758 153 758 153" fill="none"/>
  <g fill="#fff" stroke="#f9a040" stroke-width="3" stroke-linejoin="round">
    <path d="M547.5 131 L687.5 155 L751.5 155 Q757 155 757 160.5 V182 Q757 187.5 751.5 187.5 H640.5 Q635 187.5 635 182 V160.5 Q635 155 640.5 155 H654 Z"/>
  </g>
  <g fill="#fff" stroke="#f9a040" stroke-width="3" stroke-linejoin="round">
    <path d="M540.7 346 L605.5 316.3 V304 Q605.5 298.5 611 298.5 H739.5 Q745 298.5 745 304 V325 Q745 330.5 739.5 330.5 H611 Q605.5 330.5 605.5 325 Z"/>
  </g>
</svg>
<div class="t" style="left:664px;top:164px;font-size:15.5px;color:#f0892a">Endpoint</div>
<div class="t" style="left:627px;top:307px;font-size:15.3px;color:#f0892a">Request body</div>
</body></html>
